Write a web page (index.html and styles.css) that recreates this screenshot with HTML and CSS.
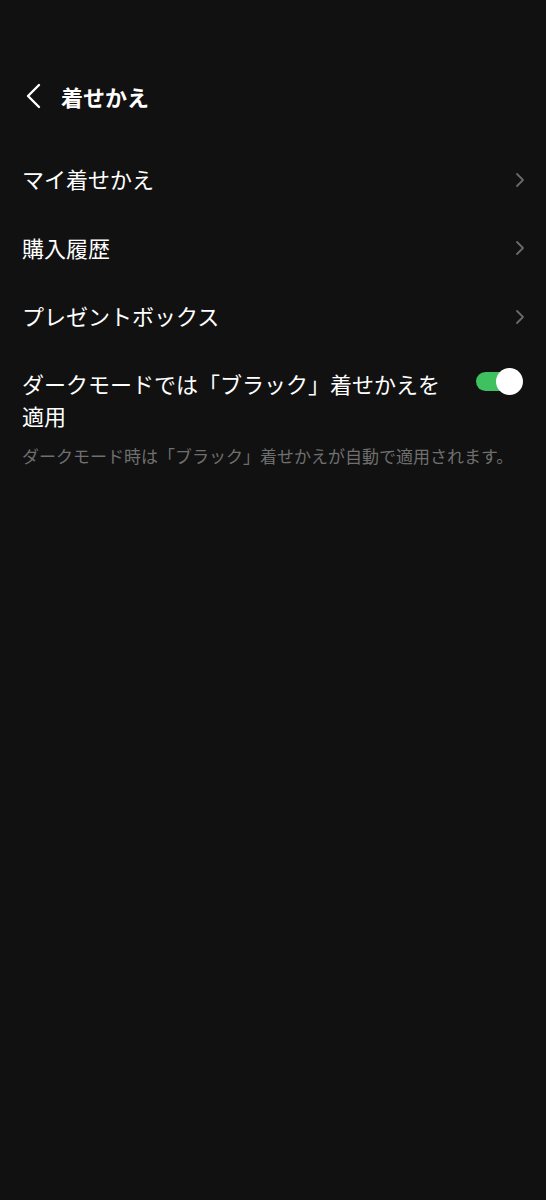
FILE: index.html
```html
<!DOCTYPE html>
<html lang="ja">
<head>
<meta charset="utf-8">
<link rel="stylesheet" href="styles.css">
</head>
<body>
<div class="page">
  <header class="header">
    <svg class="back" width="20" height="26" viewBox="0 0 20 26"><path d="M15 2 L4 13 L15 24" fill="none" stroke="#fff" stroke-width="2.4" stroke-linecap="round" stroke-linejoin="round"/></svg>
    <h1 class="title">着せかえ</h1>
  </header>
  <ul class="list">
    <li class="row"><span class="label">マイ着せかえ</span><svg class="chev" width="10" height="16" viewBox="0 0 10 16"><path d="M2 2 L8 8 L2 14" fill="none" stroke="#6a6a6a" stroke-width="1.8" stroke-linecap="round" stroke-linejoin="round"/></svg></li>
    <li class="row"><span class="label">購入履歴</span><svg class="chev" width="10" height="16" viewBox="0 0 10 16"><path d="M2 2 L8 8 L2 14" fill="none" stroke="#6a6a6a" stroke-width="1.8" stroke-linecap="round" stroke-linejoin="round"/></svg></li>
    <li class="row"><span class="label">プレゼントボックス</span><svg class="chev" width="10" height="16" viewBox="0 0 10 16"><path d="M2 2 L8 8 L2 14" fill="none" stroke="#6a6a6a" stroke-width="1.8" stroke-linecap="round" stroke-linejoin="round"/></svg></li>
  </ul>
  <section class="setting">
    <div class="setting-top">
      <p class="setting-label">ダークモードでは「ブラック」着せかえを適用</p>
      <div class="toggle"><span class="knob"></span></div>
    </div>
    <p class="note">ダークモード時は「ブラック」着せかえが自動で適用されます。</p>
  </section>
</div>
</body>
</html>
```
FILE: styles.css
```css
* { box-sizing: border-box; }
html, body { margin: 0; padding: 0; background: #111111; }
body {
  font-family: "Noto Sans CJK JP", "Noto Sans", sans-serif;
  color: #ffffff;
  width: 546px;
  min-height: 1200px;
}
.page { padding-top: 81px; }
.header {
  display: flex;
  align-items: center;
  height: 30px;
  padding-left: 24px;
}
.back { display: block; }
.title {
  margin: 0 0 0 17px;
  font-size: 22px;
  font-weight: 700;
  line-height: 30px;
}
.list {
  list-style: none;
  margin: 0;
  padding: 0;
  margin-top: 33px;
}
.row {
  display: flex;
  align-items: center;
  justify-content: space-between;
  height: 68.5px;
  padding: 0 21px 0 22px;
}
.label {
  font-size: 22px;
  line-height: 30px;
}
.chev { display: block; margin-top: 3px; }
.setting {
  padding: 0 29px 0 22px;
}
.setting-top {
  display: flex;
  justify-content: space-between;
  align-items: flex-start;
}
.setting-label {
  margin: 17px 0 0 0;
  font-size: 22px;
  line-height: 32px;
  width: 425px;
}
.toggle {
  position: relative;
  width: 41px;
  height: 19px;
  margin-top: 22px;
  background: #3fc160;
  border-radius: 10px;
}
.knob {
  position: absolute;
  right: -6px;
  top: -4px;
  width: 27px;
  height: 27px;
  border-radius: 50%;
  background: #ffffff;
}
.note {
  margin: 13px 0 0 0;
  font-size: 17px;
  line-height: 24px;
  color: #6f6f6f;
  white-space: nowrap;
}
```
